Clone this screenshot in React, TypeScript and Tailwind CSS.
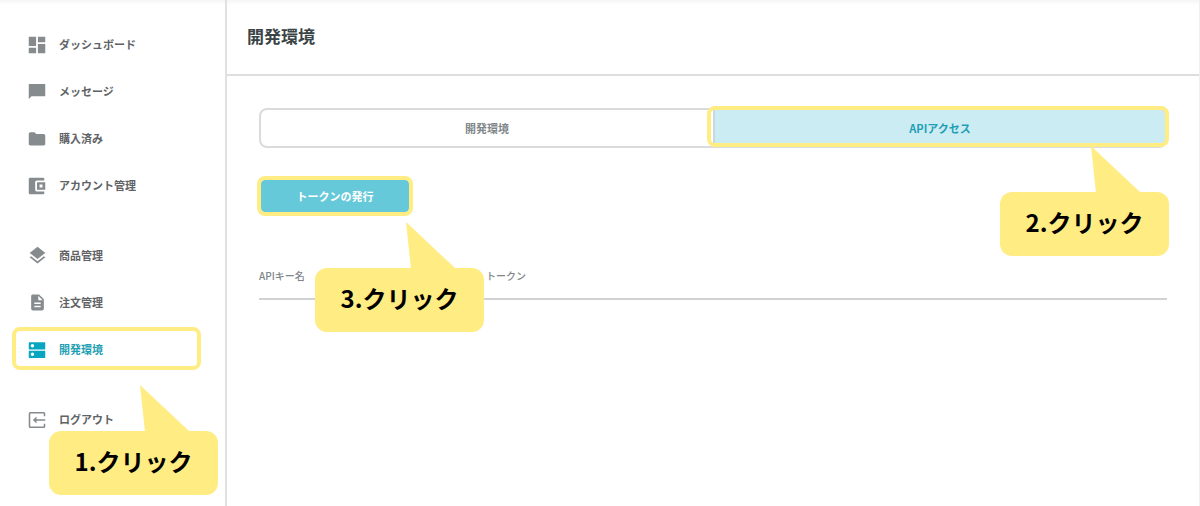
import React from 'react';

interface IconProps {
  className?: string;
  children: React.ReactNode;
}

const Icon: React.FC<IconProps> = ({ className = 'size-[22px]', children }) => (
  <span className="flex w-[22px] shrink-0 justify-center">
    <svg viewBox="0 0 24 24" fill="currentColor" className={className} aria-hidden="true">
      {children}
    </svg>
  </span>
);

const DashboardIcon = () => (
  <Icon>
    <path d="M3 13h8V3H3v10zm0 8h8v-6H3v6zm10 0h8V11h-8v10zm0-18v6h8V3h-8z" />
  </Icon>
);

const MessageIcon = () => (
  <Icon>
    <path d="M3.5 3.2h17a.5.5 0 0 1 .5.5v12.5a.5.5 0 0 1-.5.5H6l-3 2.8V3.7a.5.5 0 0 1 .5-.5z" />
  </Icon>
);

const FolderIcon = () => (
  <Icon>
    <path d="M9.3 4.7H4.8C3.8 4.7 3 5.5 3 6.5v10.7c0 1 .8 1.8 1.8 1.8h14.4c1 0 1.8-.8 1.8-1.8V8.3c0-1-.8-1.8-1.8-1.8h-8L9.3 4.7z" />
  </Icon>
);

const WalletIcon = () => (
  <Icon>
    <path d="M20 18v1.500c0 .8-.7 1.500-1.500 1.500h-14A1.500 1.500 0 0 1 3 19.500v-15C3 3.700 3.700 3 4.500 3h14c.8 0 1.500.7 1.500 1.500V6h-8c-1.100 0-2 .9-2 2v8c0 1.100.9 2 2 2h8z" />
    <path fillRule="evenodd" d="M12 8h9v8h-9V8zm2.800 2.400v3.200H18v-3.200h-3.200z" />
  </Icon>
);

const LayersIcon = () => (
  <Icon className="size-[21px]">
    <path d="M11.99 18.54l-7.37-5.73L3 14.07l9 7 9-7-1.63-1.27-7.38 5.74zM12 16l7.36-5.73L21 9l-9-7-9 7 1.63 1.27L12 16z" />
  </Icon>
);

const DocumentIcon = () => (
  <Icon className="size-[19px]">
    <path d="M14 2H6c-1.1 0-2 .9-2 2v16c0 1.1.9 2 2 2h12c1.1 0 2-.9 2-2V8l-6-6zm2 16H8v-2h8v2zm0-4H8v-2h8v2zm-3-5V3.5L18.5 9H13z" />
  </Icon>
);

const ServerIcon = () => (
  <Icon>
    <path d="M20.5 12.8h-17a.5.5 0 0 0-.5.5v6.8c0 .3.2.5.5.5h17c.3 0 .5-.2.5-.5v-6.8a.5.5 0 0 0-.5-.5zM7 18.600a1.900 1.900 0 1 1 0-3.800 1.900 1.900 0 0 1 0 3.800zM20.500 3.600h-17a.5.5 0 0 0-.5.5v6.800c0 .3.2.5.5.5h17c.3 0 .5-.2.5-.5V4.100a.5.5 0 0 0-.5-.5zM7 9.200a1.900 1.900 0 1 1 0-3.800 1.900 1.900 0 0 1 0 3.800z" />
  </Icon>
);

const LogoutIcon = () => (
  <Icon>
    <path
      d="M20.2 8V4.9a.8.8 0 0 0-.8-.8H4.600a.8.8 0 0 0-.8.8v14.200c0 .4.4.8.8.8h14.800c.4 0 .8-.4.8-.8V16"
      fill="none"
      stroke="currentColor"
      strokeWidth="1.7"
    />
    <path d="M7.500 12l4-3.700v2.800H21v1.800h-9.500v2.800z" />
  </Icon>
);

interface NavItem {
  label: string;
  icon: React.FC;
  active?: boolean;
}

const navGroups: NavItem[][] = [
  [
    { label: 'ダッシュボード', icon: DashboardIcon },
    { label: 'メッセージ', icon: MessageIcon },
    { label: '購入済み', icon: FolderIcon },
    { label: 'アカウント管理', icon: WalletIcon },
  ],
  [
    { label: '商品管理', icon: LayersIcon },
    { label: '注文管理', icon: DocumentIcon },
    { label: '開発環境', icon: ServerIcon, active: true },
  ],
  [{ label: 'ログアウト', icon: LogoutIcon }],
];

// Yellow frame laid over the control that a step points at
const Highlight: React.FC<{ className: string }> = ({ className }) => (
  <span className={`pointer-events-none absolute border-4 border-[#ffec83] ${className}`} />
);

// Speech bubble with its tail pointing up
const Callout: React.FC<{ className: string; children: React.ReactNode }> = ({ className, children }) => (
  <div
    className={`pointer-events-none absolute z-10 flex h-16 w-[169px] items-center justify-center rounded-xl bg-[#ffec83] pb-1 text-2xl font-bold whitespace-nowrap text-black ${className}`}
  >
    <svg viewBox="0 0 50 48" className="absolute bottom-full left-[91px] -mb-px h-12 w-[50px]" aria-hidden="true">
      <path d="M0 1l5 47h45z" fill="#ffec83" />
    </svg>
    {children}
  </div>
);

const Sidebar = () => (
  <nav className="w-[227px] shrink-0 border-r-2 border-[#dfe1e2] pt-[21px]">
    {navGroups.map((group, i) => (
      <ul key={i} className="mb-[23px]">
        {group.map(({ label, icon: ItemIcon, active }) => (
          <li key={label} className="relative">
            <a
              href="#"
              className={`flex h-[47px] items-center gap-[11px] pl-[26px] text-[11px] font-bold ${
                active ? 'text-[#08a5c0]' : 'text-[#868b8e]'
              }`}
            >
              <ItemIcon />
              <span className={active ? 'text-[#1f9fb4]' : 'text-[#5f6366]'}>{label}</span>
            </a>
            {active && (
              <>
                <Highlight className="top-px right-6 bottom-[3px] left-3 rounded-lg" />
                <Callout className="top-[105px] left-[49px]">1.クリック</Callout>
              </>
            )}
          </li>
        ))}
      </ul>
    ))}
  </nav>
);

const App: React.FC = () => {
  return (
    <div className="flex min-h-screen bg-linear-to-b from-[#f5f5f5] to-white to-[5px] font-['Noto_Sans_CJK_JP',sans-serif]">
      <Sidebar />

      <main className="min-w-0 flex-1 border-r border-[#efefef]">
        <header className="flex h-[76px] items-center border-b-2 border-[#dcdedf] pb-0.5 pl-5">
          <h1 className="text-[17px] font-bold text-[#3a4446]">開発環境</h1>
        </header>

        <div className="px-8 pt-8">
          {/* Tabs */}
          <div role="tablist" className="flex h-10 rounded-lg border-2 border-[#d9dbdc] text-[11px] font-bold">
            <button type="button" role="tab" aria-selected="false" className="flex-1 text-[#80868a]">
              開発環境
            </button>
            <div className="relative flex-1">
              <button
                type="button"
                role="tab"
                aria-selected="true"
                className="size-full rounded-r-md border-l-2 border-[#c8d8dd] bg-[#ccecf3] text-[#1f9fb4]"
              >
                APIアクセス
              </button>
              <Highlight className="-top-1 -right-1 -bottom-px -left-1.5 rounded-lg" />
              <Callout className="top-[82px] -right-1">2.クリック</Callout>
            </div>
          </div>

          <div className="relative mt-8 ml-0.5 w-fit">
            <button
              type="button"
              className="block h-8 w-[148px] rounded-sm bg-[#66c9d9] text-[11px] font-bold text-white"
            >
              トークンの発行
            </button>
            <Highlight className="-inset-1 rounded-lg" />
            <Callout className="top-[88px] left-[54px]">3.クリック</Callout>
          </div>

          {/* Token list */}
          <table className="mt-10 w-full table-fixed border-b-2 border-[#d0d2d3] text-left text-[10px] text-[#80868a]">
            <thead>
              <tr className="h-[47px]">
                <th scope="col" className="w-1/4 font-medium">
                  APIキー名
                </th>
                <th scope="col" className="font-medium">
                  トークン
                </th>
              </tr>
            </thead>
          </table>
        </div>
      </main>
    </div>
  );
};

export default App;
